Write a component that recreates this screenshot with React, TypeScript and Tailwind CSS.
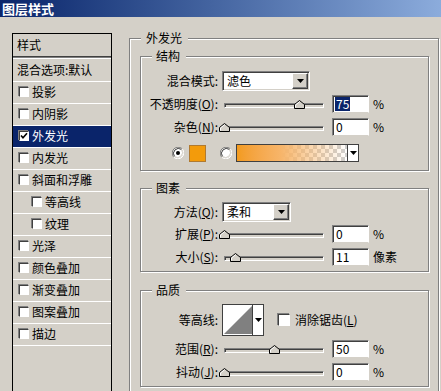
import React from "react";

function Check({ checked, size = "w-[10px] h-[10px]" }: { checked?: boolean; size?: string }) {
  return (
    <span
      className={`${size} shrink-0 bg-white border border-t-[#404040] border-l-[#404040] border-r-[#ffffff] border-b-[#ffffff] shadow-[-1px_-1px_0_#808080] flex items-center justify-center`}
    >
      {checked && (
        <svg width="8" height="8" viewBox="0 0 8 8">
          <path d="M1 3.5 L3 5.8 L7 1.2" stroke="#000" strokeWidth="1.6" fill="none" />
        </svg>
      )}
    </span>
  );
}

function Tri() {
  return (
    <svg width="7" height="4" viewBox="0 0 7 4">
      <path d="M0 0 H7 L3.5 4 Z" fill="#000" />
    </svg>
  );
}

function Radio({ checked, className = "" }: { checked?: boolean; className?: string }) {
  return (
    <svg className={`shrink-0 ${className}`} width="12" height="12" viewBox="0 0 12 12">
      <circle cx="6" cy="6" r="5" fill="#fff" />
      <path d="M10.24 1.76 A6 6 0 0 0 1.76 10.24" stroke="#808080" strokeWidth="1" fill="none" />
      <path d="M10.24 1.76 A6 6 0 0 1 1.76 10.24" stroke="#fff" strokeWidth="1" fill="none" />
      <path d="M9.5 2.5 A5 5 0 0 0 2.5 9.5" stroke="#404040" strokeWidth="1" fill="none" />
      <path d="M9.5 2.5 A5 5 0 0 1 2.5 9.5" stroke="#d4d0c8" strokeWidth="1" fill="none" />
      {checked && <circle cx="6" cy="6" r="2" fill="#000" />}
    </svg>
  );
}

function Thumb({ pos }: { pos: string }) {
  return (
    <svg className={`absolute bottom-0 ${pos}`} width="11" height="9" viewBox="0 0 11 9">
      <path d="M0.5 8.5 V4.5 L5.5 0.5 L10.5 4.5 V8.5 Z" fill="#d4d0c8" stroke="#000" strokeWidth="1" />
      <path d="M1.5 7.5 V5 L5.5 1.8" fill="none" stroke="#fff" strokeWidth="1" />
    </svg>
  );
}

function Slider({ pos }: { pos: string }) {
  return (
    <div className="relative w-[100px] h-[10px] shrink-0 ml-[6px]">
      <div className="absolute left-0 right-0 bottom-[1px] h-[5px] bg-[#d4d0c8] border border-t-[#808080] border-l-[#808080] border-r-[#ffffff] border-b-[#ffffff] shadow-[inset_1px_1px_0_#404040]" />
      <Thumb pos={pos} />
    </div>
  );
}

function Field({ value, selected }: { value: string; selected?: boolean }) {
  return (
    <div className="ml-[8px] w-[37px] h-[18px] shrink-0 bg-white border border-t-[#808080] border-l-[#808080] border-r-[#ffffff] border-b-[#d4d0c8] shadow-[inset_1px_1px_0_#404040] flex items-center pl-[2px]">
      <span className={selected ? "bg-[#0a246a] text-white px-[1px]" : "px-[1px]"}>{value}</span>
    </div>
  );
}

function Select({ text, w }: { text: string; w: string }) {
  return (
    <div
      className={`ml-[4px] ${w} h-[20px] shrink-0 bg-white border border-t-[#808080] border-l-[#808080] border-r-[#ffffff] border-b-[#ffffff] shadow-[inset_1px_1px_0_#404040,inset_-1px_-1px_0_#d4d0c8] flex items-center`}
    >
      <span className="flex-1 pl-[4px]">{text}</span>
      <div className="w-[16px] h-[16px] mr-[1px] bg-[#d4d0c8] border border-t-[#ffffff] border-l-[#ffffff] border-r-[#404040] border-b-[#404040] shadow-[inset_-1px_-1px_0_#808080] flex items-center justify-center">
        <Tri />
      </div>
    </div>
  );
}

function Label({ children }: { children: React.ReactNode }) {
  return <div className="w-[77px] shrink-0 text-right">{children}</div>;
}

function Group({
  title,
  className,
  children,
}: {
  title: string;
  className: string;
  children: React.ReactNode;
}) {
  return (
    <fieldset
      className={`w-[289px] border border-[#808080] shadow-[inset_1px_1px_0_#ffffff,1px_1px_0_#ffffff] ${className}`}
    >
      <legend className="ml-[11px] pl-[4px] pr-[6px] bg-[#d4d0c8] leading-[14px]">{title}</legend>
      {children}
    </fieldset>
  );
}

function LRow({
  label,
  checked,
  sel,
  indent,
}: {
  label: string;
  checked?: boolean;
  sel?: boolean;
  indent?: boolean;
}) {
  return (
    <div
      className={`h-[22px] pb-[1px] border-b border-white flex items-center ${
        sel ? "bg-[#0a246a] text-white" : ""
      } ${indent ? "pl-[19px]" : "pl-[6px]"}`}
    >
      <Check checked={checked} />
      <span className="ml-[3px]">{label}</span>
    </div>
  );
}

export default function App() {
  return (
    <div className="w-[441px] h-[391px] overflow-hidden bg-[#d4d0c8] text-[12px] leading-[14px] text-black font-['Noto_Sans_CJK_SC','Noto_Sans',sans-serif]">
      <div className="h-[17px] bg-gradient-to-r from-[#0a246a] to-[#8cacdc] text-white font-bold text-[13px] leading-[17px] pl-[2px]">
        图层样式
      </div>
      <div className="flex items-start">
        {/* Left list */}
        <div className="ml-[12px] mt-[16px] w-[100px] h-[360px] shrink-0 border border-black border-b-0 flex flex-col">
          <div className="h-[22px] flex items-center pl-[4px]">样式</div>
          <div className="h-[1px] bg-[#404040]" />
          <div className="h-[1px] bg-[#808080]" />
          <div className="h-[1px] bg-white" />
          <div className="h-[23px] border-b border-white flex items-center pl-[4px]">混合选项:默认</div>
          <LRow label="投影" />
          <LRow label="内阴影" />
          <LRow label="外发光" checked sel />
          <LRow label="内发光" />
          <LRow label="斜面和浮雕" />
          <LRow label="等高线" indent />
          <LRow label="纹理" indent />
          <LRow label="光泽" />
          <LRow label="颜色叠加" />
          <LRow label="渐变叠加" />
          <LRow label="图案叠加" />
          <LRow label="描边" />
        </div>

        {/* Right panel */}
        <fieldset className="ml-[17px] mt-[14px] w-[310px] shrink-0 border border-[#808080] shadow-[inset_1px_1px_0_#ffffff,1px_1px_0_#ffffff] pb-[20px]">
          <legend className="ml-[11px] pl-[5px] pr-[6px] bg-[#d4d0c8] leading-[14px]">外发光</legend>
          <div className="pl-[10px] pt-[4px] flex flex-col">
            {/* 结构 */}
            <Group title="结构" className="pb-[8px]">
              <div className="flex flex-col">
                <div className="mt-[8px] h-[20px] flex items-center">
                  <Label>混合模式:</Label>
                  <Select text="滤色" w="w-[88px]" />
                </div>
                <div className="mt-[4px] h-[18px] flex items-center">
                  <Label>
                    不透明度(<u>O</u>):
                  </Label>
                  <Slider pos="left-[70px]" />
                  <Field value="75" selected />
                  <span className="ml-[4px]">%</span>
                </div>
                <div className="mt-[5px] h-[18px] flex items-center">
                  <Label>
                    杂色(<u>N</u>):
                  </Label>
                  <Slider pos="left-[-5px]" />
                  <Field value="0" />
                  <span className="ml-[4px]">%</span>
                </div>
                <div className="mt-[8px] h-[18px] flex items-center">
                  <Radio checked className="ml-[31px]" />
                  <div className="ml-[5px] w-[17px] h-[17px] shrink-0 bg-[#f39b0b] border border-[#b07a30]" />
                  <Radio className="ml-[14px]" />
                  <div className="ml-[4px] w-[123px] h-[18px] shrink-0 border border-[#404040] flex bg-white">
                    <div className="flex-1 h-full bg-[repeating-conic-gradient(#cfcfcf_0%_25%,#ffffff_0%_50%)] bg-[length:8px_8px]">
                      <div className="w-full h-full bg-gradient-to-r from-[#f39b1d] via-[#f7b56a] via-40% to-[#fbe0c400]" />
                    </div>
                    <div className="w-[11px] h-full border-l border-[#404040] flex items-center justify-center bg-white">
                      <Tri />
                    </div>
                  </div>
                </div>
              </div>
            </Group>

            {/* 图素 */}
            <Group title="图素" className="mt-[10px] pb-[5px]">
              <div className="flex flex-col">
                <div className="mt-[7px] h-[20px] flex items-center">
                  <Label>
                    方法(<u>Q</u>):
                  </Label>
                  <Select text="柔和" w="w-[69px]" />
                </div>
                <div className="mt-[3px] h-[18px] flex items-center">
                  <Label>
                    扩展(<u>P</u>):
                  </Label>
                  <Slider pos="left-[-5px]" />
                  <Field value="0" />
                  <span className="ml-[4px]">%</span>
                </div>
                <div className="mt-[5px] h-[18px] flex items-center">
                  <Label>
                    大小(<u>S</u>):
                  </Label>
                  <Slider pos="left-[6px]" />
                  <Field value="11" />
                  <span className="ml-[4px]">像素</span>
                </div>
              </div>
            </Group>

            {/* 品质 */}
            <Group title="品质" className="mt-[11px] pb-[5px]">
              <div className="flex flex-col">
                <div className="mt-[7px] h-[32px] flex items-center">
                  <Label>等高线:</Label>
                  <div className="ml-[4px] w-[42px] h-[32px] shrink-0 border border-[#404040] bg-white flex">
                    <div className="w-[30px] h-full p-[1px] border-r border-[#404040]">
                      <svg width="28" height="28" viewBox="0 0 28 28" className="block">
                        <rect width="28" height="28" fill="#fff" />
                        <polygon points="0,28 28,0 28,28" fill="#808080" />
                      </svg>
                    </div>
                    <div className="flex-1 flex items-center justify-center">
                      <Tri />
                    </div>
                  </div>
                  <span className="ml-[14px]">
                    <Check size="w-[12px] h-[12px]" />
                  </span>
                  <span className="ml-[5px]">
                    消除锯齿(<u>L</u>)
                  </span>
                </div>
                <div className="mt-[4px] h-[18px] flex items-center">
                  <Label>
                    范围(<u>R</u>):
                  </Label>
                  <Slider pos="left-[45px]" />
                  <Field value="50" />
                  <span className="ml-[4px]">%</span>
                </div>
                <div className="mt-[5px] h-[18px] flex items-center">
                  <Label>
                    抖动(<u>J</u>):
                  </Label>
                  <Slider pos="left-[-5px]" />
                  <Field value="0" />
                  <span className="ml-[4px]">%</span>
                </div>
              </div>
            </Group>
          </div>
        </fieldset>
      </div>
    </div>
  );
}
